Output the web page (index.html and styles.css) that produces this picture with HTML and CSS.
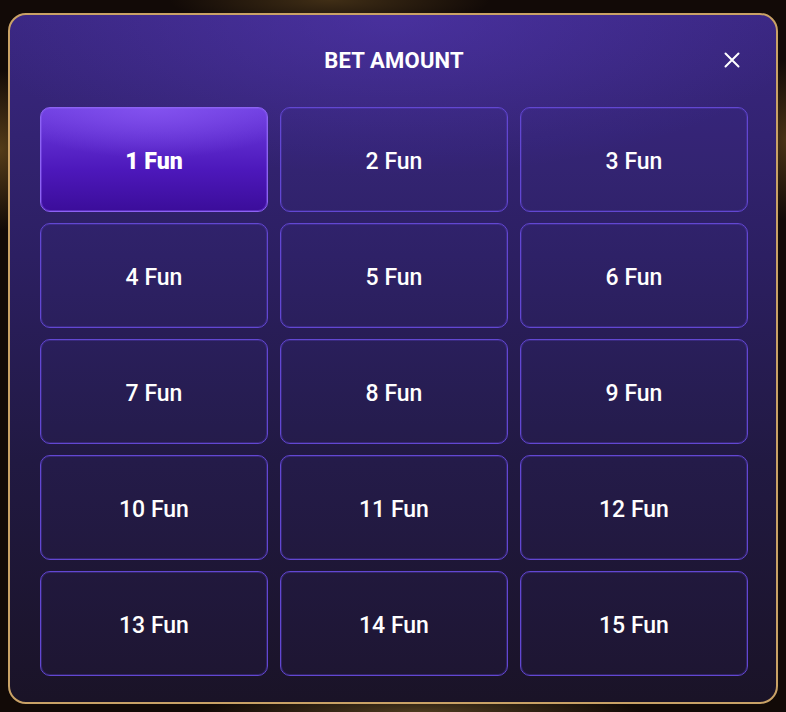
FILE: index.html
```html
<!DOCTYPE html>
<html>
  <head>
    <meta charset="utf-8">
    <title>Bet Amount</title>
    <link rel="stylesheet" href="styles.css">
  </head>
  <body>
    <div class="panel">
      <div class="panel-head">
        <span></span>
        <h2 class="title">BET AMOUNT</h2>
        <button class="close" type="button">
          <svg width="16" height="16" viewBox="0 0 16 16">
            <path d="M1.5 1.5 L14.5 14.5 M14.5 1.5 L1.5 14.5" stroke="#fff" stroke-width="2" stroke-linecap="round"/>
          </svg>
        </button>
      </div>
      <ul class="amounts">
        <li class="amount active">1 Fun</li>
        <li class="amount">2 Fun</li>
        <li class="amount">3 Fun</li>
        <li class="amount">4 Fun</li>
        <li class="amount">5 Fun</li>
        <li class="amount">6 Fun</li>
        <li class="amount">7 Fun</li>
        <li class="amount">8 Fun</li>
        <li class="amount">9 Fun</li>
        <li class="amount">10 Fun</li>
        <li class="amount">11 Fun</li>
        <li class="amount">12 Fun</li>
        <li class="amount">13 Fun</li>
        <li class="amount">14 Fun</li>
        <li class="amount">15 Fun</li>
      </ul>
    </div>
  </body>
</html>
```

FILE: styles.css
```css
*{
  margin: 0;
  padding: 0;
  box-sizing: border-box;
}
html, body{
  height: 100%;
}
body{
  font-family: Roboto, "Liberation Sans", sans-serif;
  color: #fff;
  background:
    radial-gradient(ellipse 160px 30px at 330px 0, rgba(120,90,40,.45), transparent),
    radial-gradient(ellipse 60px 80px at 0 150px, rgba(150,110,40,.5), transparent),
    radial-gradient(ellipse 40px 80px at 786px 140px, rgba(140,100,40,.45), transparent),
    radial-gradient(ellipse 220px 20px at 420px 712px, rgba(150,120,60,.45), transparent),
    #120a07;
  padding: 13px 8px 0 8px;
}
.panel{
  width: 770px;
  height: 691px;
  border: 2px solid #c9a266;
  border-radius: 18px;
  background:
    radial-gradient(ellipse 420px 160px at 50% 0, rgba(90,60,190,.45), transparent),
    linear-gradient(180deg, #3a2782 0%, #2c1f62 35%, #211942 65%, #1a1327 100%);
  padding: 0 28px 0 30px;
}
.panel-head{
  height: 88px;
  margin-bottom: 4px;
  display: grid;
  grid-template-columns: 1fr auto 1fr;
  align-items: center;
}
.title{
  font-size: 22px;
  font-weight: 700;
  letter-spacing: .2px;
  padding-top: 2px;
}
.close{
  justify-self: end;
  margin-right: 6px;
  width: 20px;
  height: 20px;
  border: none;
  background: none;
  display: flex;
  align-items: center;
  justify-content: center;
  margin-top: 2px;
}
.amounts{
  list-style: none;
  display: grid;
  grid-template-columns: repeat(3, 228px);
  grid-auto-rows: 105px;
  gap: 11px 12px;
}
.amount{
  border: 1px solid #6247d2;
  box-shadow: inset 0 0 0 1px rgba(90,63,196,.35);
  border-radius: 10px;
  background: rgba(90,60,190,.06);
  display: flex;
  align-items: center;
  justify-content: center;
  padding-top: 3px;
  font-size: 23px;
  font-weight: 500;
}
.amount.active{
  border-color: #8d62f4;
  box-shadow: inset 0 0 0 1px rgba(141,98,244,.4);
  background:
    radial-gradient(ellipse 150px 50px at 50% 0, rgba(140,90,245,.7), transparent),
    linear-gradient(180deg, #6e3ee0 0%, #4d18bb 60%, #3b0d9a 100%);
  font-weight: 900;
}
```
